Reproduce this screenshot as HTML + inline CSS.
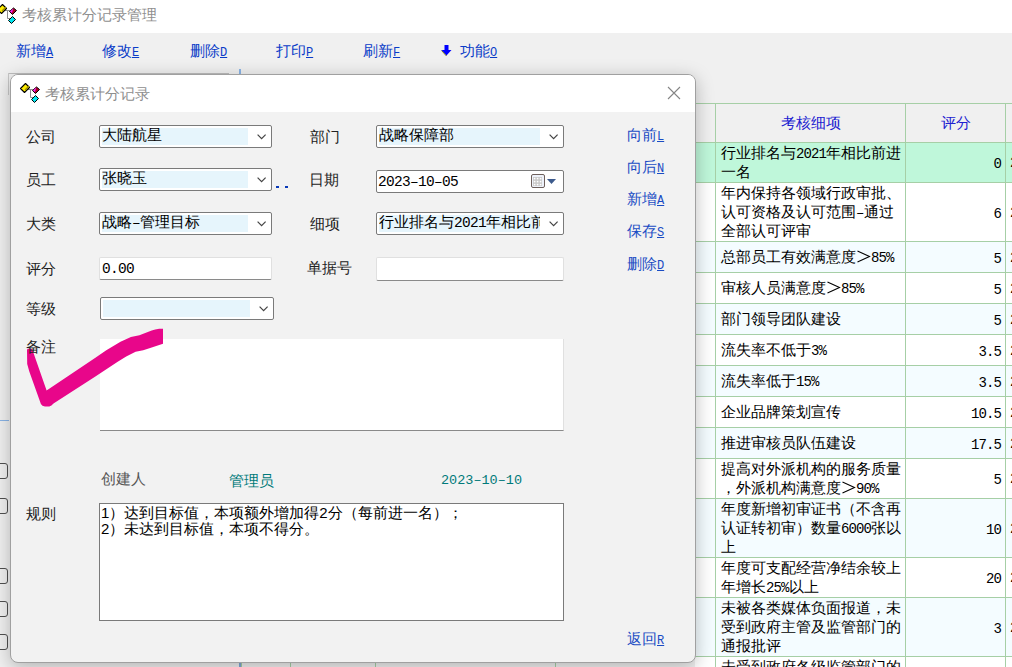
<!DOCTYPE html>
<html><head><meta charset="utf-8">
<style>
*{box-sizing:border-box;margin:0;padding:0}
html,body{width:1012px;height:667px;overflow:hidden}
body{position:relative;background:#f0f0f0;font-family:"Liberation Sans",sans-serif;color:#000;font-weight:300}
.a{position:absolute;white-space:nowrap}
.m{font-family:"Liberation Mono",monospace;font-size:14.5px;letter-spacing:-0.7px;line-height:0}
.cellt .m{font-size:14px;letter-spacing:-0.9px}
.ttl{color:#8f8f8f;font-size:15px;line-height:15px}
.tool{color:#0a3cc8;font-size:15px;line-height:16px;top:43px}
.u{text-decoration:underline;font-family:"Liberation Mono",monospace;font-size:12px}
.lbl{color:#222;font-size:15px;line-height:15px;font-weight:350;z-index:2}
.box{position:absolute;border:1px solid #7a7a7a;border-radius:2px;background:#fff}
.hl{position:absolute;background:#e6f5fc}
.inp{font-size:15px;line-height:16px;color:#000}
.tbx{position:absolute;background:#fff;border:1px solid #e0e0e0;border-bottom:1px solid #8a8a8a;border-radius:2px}
.lnk{color:#1a4cc4;font-size:15px;line-height:16px}
.cellt{font-size:15px;line-height:19px;color:#000}
.gt{vertical-align:-1px}
.hdr{font-size:15px;line-height:19px;color:#2020d0}
</style></head><body>
<!-- window title -->
<div class="a" style="left:0;top:0;width:1012px;height:33px;background:#fff"></div>
<svg class="a" style="left:-5px;top:2px" width="24" height="24" viewBox="0 0 24 24"><path d="M9 8.5 L15 8.5 M12.5 8.5 L12.5 16.5 L15 16.5" fill="none" stroke="#8c8c8c" stroke-width="1"/>
<path d="M2.5 7.5 L7.5 2.5 L11.5 6.5 L6.5 11.5 Z" fill="#ffee00" stroke="#000" stroke-width="1.1" stroke-linejoin="round"/>
<path d="M7 9 L11 5" stroke="#a09000" stroke-width="1.2"/>
<path d="M14.5 9.5 L18.5 6 L21.5 8.5 L17.5 12.5 Z" fill="#aa0022" stroke="#000" stroke-width="1" stroke-linejoin="round"/>
<path d="M15 9.6 L18.2 6.6 L17 11 Z" fill="#ff22ff"/>
<path d="M13.5 18.5 L17.5 14.5 L20.5 17.5 L16.5 21.5 Z" fill="#00e5ee" stroke="#000" stroke-width="1" stroke-linejoin="round"/></svg>
<div class="a ttl" style="left:22px;top:7px">考核累计分记录管理</div>

<!-- toolbar -->
<div class="a tool" style="left:16px">新增<span class="u">A</span></div>
<div class="a tool" style="left:102px">修改<span class="u">E</span></div>
<div class="a tool" style="left:190px">删除<span class="u">D</span></div>
<div class="a tool" style="left:276px">打印<span class="u">P</span></div>
<div class="a tool" style="left:363px">刷新<span class="u">F</span></div>
<svg class="a" style="left:441px;top:44px" width="12" height="13" viewBox="0 0 12 13"><path d="M3.5 1 L7.5 1 L7.5 6 L10.5 6 L5.5 11.5 L0.5 6 L3.5 6 Z" fill="#0000ff"/><path d="M0.5 6.5 L5.5 12" stroke="#6b6b20" stroke-width="1"/></svg><div class="a tool" style="left:460px">功能<span class="u">O</span></div>

<!-- behind panel -->
<div class="a" style="left:8px;top:73px;width:221px;height:1px;background:#bdbdbd"></div>
<div class="a" style="left:8px;top:73px;width:1px;height:22px;background:#c8c8c8"></div>
<div class="a" style="left:239px;top:69px;width:2px;height:6px;background:#8ab4e6"></div>
<div class="a" style="left:239px;top:600px;width:2px;height:67px;background:#7fa6d6"></div>
<div class="a" style="left:241px;top:600px;width:1px;height:67px;background:#a6cfa6"></div>
<div class="a" style="left:290px;top:600px;width:1px;height:67px;background:#a6cfa6"></div>
<div class="a" style="left:375px;top:600px;width:1px;height:67px;background:#a6cfa6"></div>
<div class="a" style="left:555px;top:600px;width:1px;height:67px;background:#a6cfa6"></div>
<div class="a" style="left:0;top:420px;width:9px;height:1px;background:#8ab4e6"></div>
<div class="a" style="left:-8px;top:463px;width:16px;height:16px;border:1px solid #505050;border-radius:3px"></div>
<div class="a" style="left:-8px;top:498px;width:16px;height:16px;border:1px solid #505050;border-radius:3px"></div>
<div class="a" style="left:-8px;top:568px;width:16px;height:16px;border:1px solid #505050;border-radius:3px"></div>
<div class="a" style="left:-8px;top:601px;width:16px;height:16px;border:1px solid #505050;border-radius:3px"></div>
<div class="a" style="left:-8px;top:634px;width:16px;height:16px;border:1px solid #505050;border-radius:3px"></div>
<div class="a" style="left:695px;top:103px;width:317px;height:39px;background:#f0f0f0"></div>
<div class="a" style="left:695px;top:143px;width:317px;height:40px;background:#bff7da"></div>
<div class="a cellt" style="left:721px;top:142.5px">行业排名与<span class="m">2021</span>年相比前进<br>一名</div>
<div class="a cellt" style="right:11px;top:153.0px;text-align:right"><span class="m">0</span></div>
<div class="a cellt" style="left:1010px;top:152.0px"><span class="m">2023</span></div>
<div class="a" style="left:695px;top:183px;width:317px;height:59px;background:#ffffff"></div>
<div class="a cellt" style="left:721px;top:182.5px">年内保持各领域行政审批、<br>认可资格及认可范围<span class="m">–</span>通过<br>全部认可评审</div>
<div class="a cellt" style="right:11px;top:202.5px;text-align:right"><span class="m">6</span></div>
<div class="a cellt" style="left:1010px;top:201.5px"><span class="m">2023</span></div>
<div class="a" style="left:695px;top:242px;width:317px;height:31px;background:#f4fcff"></div>
<div class="a cellt" style="left:721px;top:246.5px">总部员工有效满意度<svg class="gt" width="15" height="13" viewBox="0 0 15 13"><path d="M1.5 1 L13.5 6.5 L1.5 12" fill="none" stroke="#000" stroke-width="1.1"/></svg><span class="m">85%</span></div>
<div class="a cellt" style="right:11px;top:247.5px;text-align:right"><span class="m">5</span></div>
<div class="a cellt" style="left:1010px;top:246.5px"><span class="m">2023</span></div>
<div class="a" style="left:695px;top:273px;width:317px;height:31px;background:#ffffff"></div>
<div class="a cellt" style="left:721px;top:277.5px">审核人员满意度<svg class="gt" width="15" height="13" viewBox="0 0 15 13"><path d="M1.5 1 L13.5 6.5 L1.5 12" fill="none" stroke="#000" stroke-width="1.1"/></svg><span class="m">85%</span></div>
<div class="a cellt" style="right:11px;top:278.5px;text-align:right"><span class="m">5</span></div>
<div class="a cellt" style="left:1010px;top:277.5px"><span class="m">2023</span></div>
<div class="a" style="left:695px;top:304px;width:317px;height:31px;background:#f4fcff"></div>
<div class="a cellt" style="left:721px;top:308.5px">部门领导团队建设</div>
<div class="a cellt" style="right:11px;top:309.5px;text-align:right"><span class="m">5</span></div>
<div class="a cellt" style="left:1010px;top:308.5px"><span class="m">2023</span></div>
<div class="a" style="left:695px;top:335px;width:317px;height:31px;background:#ffffff"></div>
<div class="a cellt" style="left:721px;top:339.5px">流失率不低于<span class="m">3%</span></div>
<div class="a cellt" style="right:11px;top:340.5px;text-align:right"><span class="m">3.5</span></div>
<div class="a cellt" style="left:1010px;top:339.5px"><span class="m">2023</span></div>
<div class="a" style="left:695px;top:366px;width:317px;height:31px;background:#f4fcff"></div>
<div class="a cellt" style="left:721px;top:370.5px">流失率低于<span class="m">15%</span></div>
<div class="a cellt" style="right:11px;top:371.5px;text-align:right"><span class="m">3.5</span></div>
<div class="a cellt" style="left:1010px;top:370.5px"><span class="m">2023</span></div>
<div class="a" style="left:695px;top:397px;width:317px;height:31px;background:#ffffff"></div>
<div class="a cellt" style="left:721px;top:401.5px">企业品牌策划宣传</div>
<div class="a cellt" style="right:11px;top:402.5px;text-align:right"><span class="m">10.5</span></div>
<div class="a cellt" style="left:1010px;top:401.5px"><span class="m">2023</span></div>
<div class="a" style="left:695px;top:428px;width:317px;height:31px;background:#f4fcff"></div>
<div class="a cellt" style="left:721px;top:432.5px">推进审核员队伍建设</div>
<div class="a cellt" style="right:11px;top:433.5px;text-align:right"><span class="m">17.5</span></div>
<div class="a cellt" style="left:1010px;top:432.5px"><span class="m">2023</span></div>
<div class="a" style="left:695px;top:459px;width:317px;height:40px;background:#ffffff"></div>
<div class="a cellt" style="left:721px;top:458.5px">提高对外派机构的服务质量<br>，外派机构满意度<svg class="gt" width="15" height="13" viewBox="0 0 15 13"><path d="M1.5 1 L13.5 6.5 L1.5 12" fill="none" stroke="#000" stroke-width="1.1"/></svg><span class="m">90%</span></div>
<div class="a cellt" style="right:11px;top:469.0px;text-align:right"><span class="m">5</span></div>
<div class="a cellt" style="left:1010px;top:468.0px"><span class="m">2023</span></div>
<div class="a" style="left:695px;top:499px;width:317px;height:59px;background:#f4fcff"></div>
<div class="a cellt" style="left:721px;top:498.5px">年度新增初审证书（不含再<br>认证转初审）数量<span class="m">6000</span>张以<br>上</div>
<div class="a cellt" style="right:11px;top:518.5px;text-align:right"><span class="m">10</span></div>
<div class="a cellt" style="left:1010px;top:517.5px"><span class="m">2023</span></div>
<div class="a" style="left:695px;top:558px;width:317px;height:40px;background:#ffffff"></div>
<div class="a cellt" style="left:721px;top:557.5px">年度可支配经营净结余较上<br>年增长<span class="m">25%</span>以上</div>
<div class="a cellt" style="right:11px;top:568.0px;text-align:right"><span class="m">20</span></div>
<div class="a cellt" style="left:1010px;top:567.0px"><span class="m">2023</span></div>
<div class="a" style="left:695px;top:598px;width:317px;height:59px;background:#f4fcff"></div>
<div class="a cellt" style="left:721px;top:597.5px">未被各类媒体负面报道，未<br>受到政府主管及监管部门的<br>通报批评</div>
<div class="a cellt" style="right:11px;top:617.5px;text-align:right"><span class="m">3</span></div>
<div class="a cellt" style="left:1010px;top:616.5px"><span class="m">2023</span></div>
<div class="a" style="left:695px;top:657px;width:317px;height:59px;background:#ffffff"></div>
<div class="a cellt" style="left:721px;top:656.5px">未受到政府各级监管部门的<br>通报批评<br>通报批评</div>
<div class="a cellt" style="right:11px;top:676.5px;text-align:right"><span class="m">3</span></div>
<div class="a cellt" style="left:1010px;top:675.5px"><span class="m">2023</span></div>
<div class="a" style="left:695px;top:103px;width:317px;height:1px;background:#a6cfa6"></div>
<div class="a" style="left:695px;top:142px;width:317px;height:1px;background:#a6cfa6"></div>
<div class="a" style="left:695px;top:182px;width:317px;height:1px;background:#a6cfa6"></div>
<div class="a" style="left:695px;top:241px;width:317px;height:1px;background:#a6cfa6"></div>
<div class="a" style="left:695px;top:272px;width:317px;height:1px;background:#a6cfa6"></div>
<div class="a" style="left:695px;top:303px;width:317px;height:1px;background:#a6cfa6"></div>
<div class="a" style="left:695px;top:334px;width:317px;height:1px;background:#a6cfa6"></div>
<div class="a" style="left:695px;top:365px;width:317px;height:1px;background:#a6cfa6"></div>
<div class="a" style="left:695px;top:396px;width:317px;height:1px;background:#a6cfa6"></div>
<div class="a" style="left:695px;top:427px;width:317px;height:1px;background:#a6cfa6"></div>
<div class="a" style="left:695px;top:458px;width:317px;height:1px;background:#a6cfa6"></div>
<div class="a" style="left:695px;top:498px;width:317px;height:1px;background:#a6cfa6"></div>
<div class="a" style="left:695px;top:557px;width:317px;height:1px;background:#a6cfa6"></div>
<div class="a" style="left:695px;top:597px;width:317px;height:1px;background:#a6cfa6"></div>
<div class="a" style="left:695px;top:656px;width:317px;height:1px;background:#a6cfa6"></div>
<div class="a" style="left:695px;top:715px;width:317px;height:1px;background:#a6cfa6"></div>
<div class="a" style="left:715px;top:103px;width:1px;height:564px;background:#a6cfa6"></div>
<div class="a" style="left:905px;top:103px;width:1px;height:564px;background:#a6cfa6"></div>
<div class="a" style="left:1005px;top:103px;width:1px;height:564px;background:#a6cfa6"></div>
<div class="a hdr" style="left:781px;top:113px">考核细项</div>
<div class="a hdr" style="left:941px;top:113px">评分</div>

<!-- dialog -->
<div class="a" style="left:10px;top:74px;width:686px;height:589px;border:1px solid #a0a0a0;border-radius:8px;background:#f2f2f2;box-shadow:0 4px 18px rgba(0,0,0,0.26);overflow:hidden">
  <div class="a" style="left:0;top:0;width:686px;height:37px;background:#fff"></div>
</div>
<svg class="a" style="left:18px;top:81px" width="24" height="24" viewBox="0 0 24 24"><path d="M9 8.5 L15 8.5 M12.5 8.5 L12.5 16.5 L15 16.5" fill="none" stroke="#8c8c8c" stroke-width="1"/>
<path d="M2.5 7.5 L7.5 2.5 L11.5 6.5 L6.5 11.5 Z" fill="#ffee00" stroke="#000" stroke-width="1.1" stroke-linejoin="round"/>
<path d="M7 9 L11 5" stroke="#a09000" stroke-width="1.2"/>
<path d="M14.5 9.5 L18.5 6 L21.5 8.5 L17.5 12.5 Z" fill="#aa0022" stroke="#000" stroke-width="1" stroke-linejoin="round"/>
<path d="M15 9.6 L18.2 6.6 L17 11 Z" fill="#ff22ff"/>
<path d="M13.5 18.5 L17.5 14.5 L20.5 17.5 L16.5 21.5 Z" fill="#00e5ee" stroke="#000" stroke-width="1" stroke-linejoin="round"/></svg>
<div class="a ttl" style="left:45px;top:86px">考核累计分记录</div>
<svg class="a" style="left:667px;top:86px" width="14" height="14" viewBox="0 0 14 14"><path d="M1 1 L13 13 M13 1 L1 13" stroke="#858585" stroke-width="1.1"/></svg>

<!-- check mark -->
<svg class="a" style="left:0;top:0;z-index:1" width="1012" height="667">
<path d="M27 349.5 L27.2 364 L29.3 371.5 L40.9 404 Q42 406.4 45 406.4 L49.3 406.4 Q51.5 406 53.5 403.5 L95 376.8 L117.7 361.7 L126.2 356.5 L135.6 351.7 L143.2 350.3 L151.7 347.5 L163 343.7 L163 328.8 L159.2 328.8 Q155 329.5 151.7 330.5 L139.4 335.2 L130.9 337.1 L120.5 341.8 L106.3 350.3 L95 357.9 L46.6 390.4 L32.3 349.6 Q29.5 347.5 27 349.5 Z" fill="#e8068a"/>
</svg>
<!-- labels -->
<div class="a lbl" style="left:26px;top:129px">公司</div>
<div class="a lbl" style="left:26px;top:172px">员工</div>
<div class="a lbl" style="left:26px;top:216px">大类</div>
<div class="a lbl" style="left:26px;top:261px">评分</div>
<div class="a lbl" style="left:26px;top:301px">等级</div>
<div class="a lbl" style="left:26px;top:339px">备注</div>
<div class="a lbl" style="left:26px;top:506px">规则</div>
<div class="a lbl" style="left:310px;top:129px">部门</div>
<div class="a lbl" style="left:309px;top:172px">日期</div>
<div class="a lbl" style="left:310px;top:216px">细项</div>
<div class="a lbl" style="left:307px;top:260px">单据号</div>
<div class="a lbl" style="left:101px;top:471px;color:#555">创建人</div>
<div class="a lbl" style="left:229px;top:473px;color:#007a7a">管理员</div>
<div class="a" style="left:441px;top:473px;color:#007a7a;font-family:'Liberation Mono',monospace;font-size:13.5px">2023–10–10</div>

<!-- combos -->
<div class="box" style="left:99px;top:125px;width:173px;height:23px"></div>
<div class="hl" style="left:102px;top:128px;width:146px;height:17px"></div>
<div class="a inp" style="left:102px;top:127px">大陆航星</div>
<svg class="a" style="left:257px;top:134px" width="10" height="6"><path d="M0.6 0.6 L4.6 4.6 L8.6 0.6" fill="none" stroke="#444" stroke-width="1.2"/></svg>

<div class="box" style="left:99px;top:168px;width:173px;height:23px"></div>
<div class="hl" style="left:102px;top:171px;width:146px;height:17px"></div>
<div class="a inp" style="left:102px;top:170px">张晓玉</div>
<svg class="a" style="left:257px;top:177px" width="10" height="6"><path d="M0.6 0.6 L4.6 4.6 L8.6 0.6" fill="none" stroke="#444" stroke-width="1.2"/></svg>
<div class="a" style="left:276px;top:186px;width:3px;height:2px;background:#0a3ab8"></div>
<div class="a" style="left:285px;top:186px;width:3px;height:2px;background:#0a3ab8"></div>

<div class="box" style="left:99px;top:212px;width:173px;height:23px"></div>
<div class="hl" style="left:102px;top:215px;width:146px;height:17px"></div>
<div class="a inp" style="left:102px;top:214px">战略<span class="m">–</span>管理目标</div>
<svg class="a" style="left:257px;top:221px" width="10" height="6"><path d="M0.6 0.6 L4.6 4.6 L8.6 0.6" fill="none" stroke="#444" stroke-width="1.2"/></svg>

<div class="tbx" style="left:99px;top:257px;width:173px;height:23px"></div>
<div class="a inp" style="left:102px;top:260px"><span class="m">0.00</span></div>

<div class="box" style="left:100px;top:297px;width:174px;height:23px"></div>
<div class="hl" style="left:103px;top:300px;width:147px;height:17px"></div>
<svg class="a" style="left:259px;top:306px" width="10" height="6"><path d="M0.6 0.6 L4.6 4.6 L8.6 0.6" fill="none" stroke="#444" stroke-width="1.2"/></svg>

<div class="box" style="left:376px;top:125px;width:188px;height:23px"></div>
<div class="hl" style="left:379px;top:128px;width:161px;height:17px"></div>
<div class="a inp" style="left:379px;top:127px">战略保障部</div>
<svg class="a" style="left:549px;top:134px" width="10" height="6"><path d="M0.6 0.6 L4.6 4.6 L8.6 0.6" fill="none" stroke="#444" stroke-width="1.2"/></svg>

<div class="box" style="left:376px;top:170px;width:188px;height:23px"></div>
<div class="a inp" style="left:378px;top:173px"><span class="m">2023–10–05</span></div>
<svg class="a" style="left:531px;top:174px" width="26" height="15" viewBox="0 0 26 15">
<rect x="0.5" y="0.5" width="13" height="13" rx="1.5" fill="#eef2fa" stroke="#6e605c"/>
<rect x="2" y="3" width="9" height="9" fill="#c8c8c8"/>
<g fill="#fff"><rect x="2.8" y="3.8" width="1.6" height="1.6"/><rect x="5.8" y="3.8" width="1.6" height="1.6"/><rect x="8.8" y="3.8" width="1.6" height="1.6"/><rect x="2.8" y="6.8" width="1.6" height="1.6"/><rect x="5.8" y="6.8" width="1.6" height="1.6"/><rect x="8.8" y="6.8" width="1.6" height="1.6"/><rect x="2.8" y="9.8" width="1.6" height="1.6"/><rect x="5.8" y="9.8" width="1.6" height="1.6"/><rect x="8.8" y="9.8" width="1.6" height="1.6"/></g>
<path d="M16 5 L25 5 L20.5 10 Z" fill="#3c5a8c"/>
</svg>

<div class="box" style="left:376px;top:212px;width:188px;height:23px"></div>
<div class="hl" style="left:379px;top:215px;width:161px;height:17px"></div>
<div class="a inp" style="left:379px;top:214px;width:161px;overflow:hidden">行业排名与<span class="m">2021</span>年相比前进一名</div>
<svg class="a" style="left:549px;top:221px" width="10" height="6"><path d="M0.6 0.6 L4.6 4.6 L8.6 0.6" fill="none" stroke="#444" stroke-width="1.2"/></svg>

<div class="tbx" style="left:376px;top:257px;width:188px;height:24px"></div>

<!-- textareas -->
<div class="a" style="left:100px;top:339px;width:464px;height:92px;background:#fff;border-bottom:1px solid #8a8a8a;border-right:1px solid #e0e0e0"></div>
<div class="a" style="left:99px;top:503px;width:465px;height:118px;background:#fff;border:1px solid #7a7a7a"></div>
<div class="a" style="left:101px;top:505px;font-size:15px;line-height:16px">1）达到目标值，本项额外增加得2分（每前进一名）；<br>2）未达到目标值，本项不得分。</div>

<!-- links -->
<div class="a lnk" style="left:627px;top:127px">向前<span class="u">L</span></div>
<div class="a lnk" style="left:627px;top:159px">向后<span class="u">N</span></div>
<div class="a lnk" style="left:627px;top:191px">新增<span class="u">A</span></div>
<div class="a lnk" style="left:627px;top:223px">保存<span class="u">S</span></div>
<div class="a lnk" style="left:627px;top:256px">删除<span class="u">D</span></div>
<div class="a lnk" style="left:627px;top:631px">返回<span class="u">R</span></div>


</body></html>
